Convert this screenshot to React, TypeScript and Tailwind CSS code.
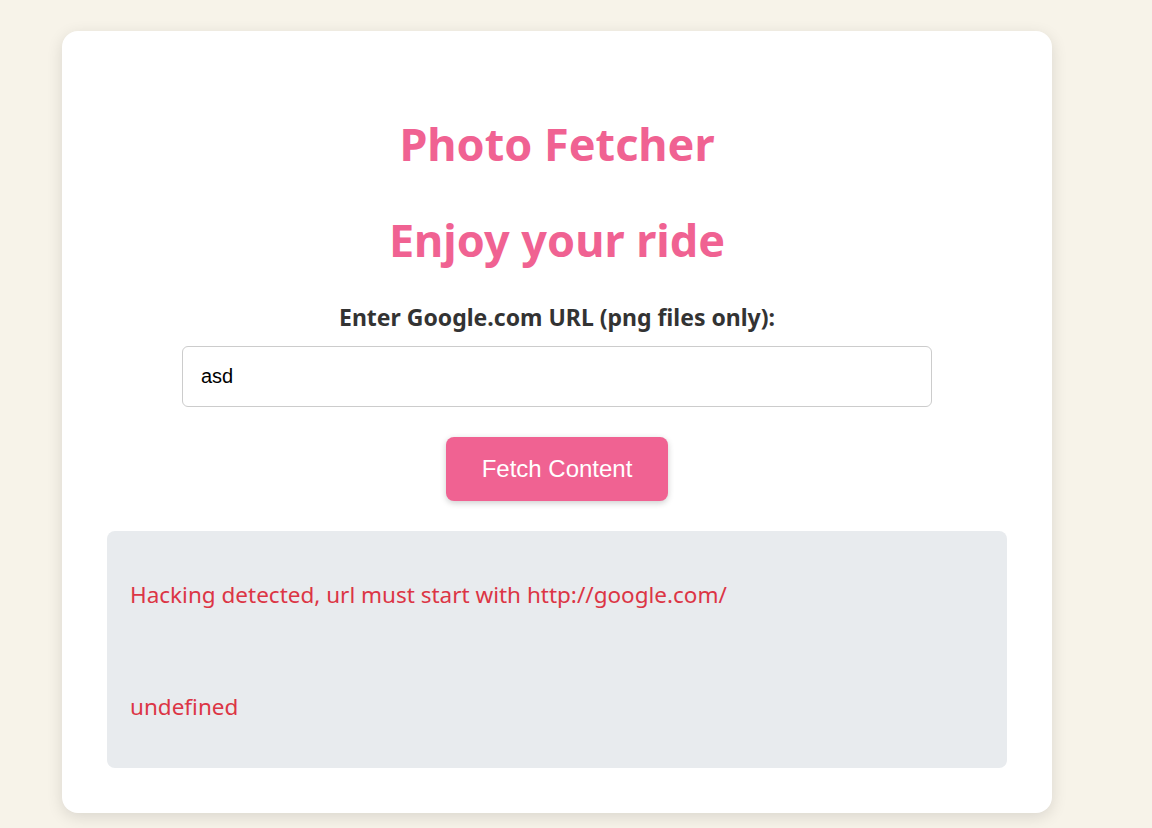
import { useState } from 'react'

export default function App() {
  const [url, setUrl] = useState('asd')

  return (
    <div className="min-h-[828px] w-full bg-[#f7f3e9] pt-[31px] pl-[62px]" style={{ fontFamily: '"Noto Sans", "Open Sans", sans-serif' }}>
      <div className="w-[990px] rounded-2xl bg-white px-[45px] pt-[40px] pb-[45px] shadow-[0_4px_16px_rgba(0,0,0,0.12)]">
        <h1 className="mt-[44px] text-center text-[45px] font-bold leading-[58px] text-[#f06292]">Photo Fetcher</h1>
        <h2 className="mt-[38px] text-center text-[45px] font-bold leading-[58px] text-[#f06292]">Enjoy your ride</h2>

        <form
          className="mt-[34px] flex flex-col items-center"
          onSubmit={(e) => {
            e.preventDefault()
          }}
        >
          <label htmlFor="url" className="text-[23px] font-bold leading-[28px] text-[#333333]">
            Enter Google.com URL (png files only):
          </label>
          <input
            id="url"
            type="text"
            value={url}
            onChange={(e) => setUrl(e.target.value)}
            className="mt-[15px] h-[61px] w-[750px] rounded-md border border-[#cccccc] px-[18px] text-[20px] text-black focus:outline-none"
            style={{ fontFamily: '"Liberation Sans", Arial, sans-serif' }}
          />
          <button
            type="submit"
            className="mt-[30px] h-[64px] w-[222px] rounded-lg bg-[#f06292] text-[24px] text-white shadow-[0_2px_6px_rgba(0,0,0,0.2)]"
            style={{ fontFamily: '"Liberation Sans", Arial, sans-serif' }}
          >
            Fetch Content
          </button>
        </form>

        <div className="mt-[30px] h-[237px] rounded-lg bg-[#e8ebee] px-[23px] pt-[49px]">
          <p className="text-[22.5px] leading-[30px] text-[#dc3545]">Hacking detected, url must start with http://google.com/</p>
          <p className="mt-[82px] text-[22.5px] leading-[30px] text-[#dc3545]">undefined</p>
        </div>
      </div>
    </div>
  )
}
